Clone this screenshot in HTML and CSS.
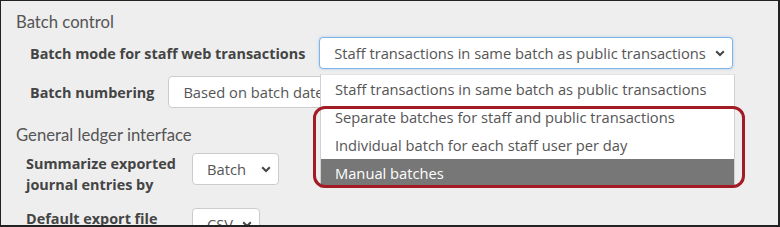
FILE: index.html
```html
<!DOCTYPE html>
<html lang="en">
<head>
    <meta charset="UTF-8">
    <title>Batch control settings</title>
    <link rel="stylesheet" href="styles.css">
</head>
<body>
    <div class="frame">
        <h2 class="section-title">Batch control</h2>
        <div class="field">
            <label class="field-label">Batch mode for staff web transactions</label>
            <div class="select select-focus select-mode">
                <span>Staff transactions in same batch as public transactions</span>
                <svg class="chevron" width="10" height="7" viewBox="0 0 10 7"><path d="M1.2 1.3 L5 5 L8.8 1.3" fill="none" stroke="#444" stroke-width="2"/></svg>
            </div>
        </div>
        <div class="field">
            <label class="field-label">Batch numbering</label>
            <div class="select select-numbering">
                <span>Based on batch date</span>
            </div>
        </div>

        <h2 class="section-title section-gl">General ledger interface</h2>
        <div class="field field-gl">
            <label class="field-label field-label-wrap">Summarize exported journal entries by</label>
            <div class="select select-small">
                <span>Batch</span>
                <svg class="chevron" width="10" height="7" viewBox="0 0 10 7"><path d="M1.2 1.3 L5 5 L8.8 1.3" fill="none" stroke="#444" stroke-width="2"/></svg>
            </div>
        </div>
        <div class="field field-gl field-export">
            <label class="field-label field-label-wrap">Default export file format</label>
            <div class="select select-csv">
                <span>CSV</span>
                <svg class="chevron" width="10" height="7" viewBox="0 0 10 7"><path d="M1.2 1.3 L5 5 L8.8 1.3" fill="none" stroke="#444" stroke-width="2"/></svg>
            </div>
        </div>

        <ul class="dropdown">
            <li class="option">Staff transactions in same batch as public transactions</li>
            <li class="option">Separate batches for staff and public transactions</li>
            <li class="option">Individual batch for each staff user per day</li>
            <li class="option option-active">Manual batches</li>
        </ul>
        <div class="highlight"></div>
    </div>
</body>
</html>
```

FILE: styles.css
```css
body {
    margin: 0;
    font-family: "Open Sans", sans-serif;
}

.frame {
    position: relative;
    width: 780px;
    height: 227px;
    box-sizing: border-box;
    padding: 10px 0 0 15px;
    background-color: #eeeeee;
    border-style: solid;
    border-color: #222;
    border-width: 1px 2px 2px 1px;
    overflow: hidden;
}

.section-title {
    margin: 0;
    font-family: Lato, sans-serif;
    font-size: 16.7px;
    font-weight: normal;
    line-height: 22px;
    color: #555;
}
.section-gl {
    margin-top: 16px;
}

.field {
    display: flex;
    flex-flow: row nowrap;
    align-items: center;
    gap: 14px;
    margin: 4px 0 7px 14px;
}
.field-gl {
    align-items: flex-start;
    margin: 7px 0 0 10px;
    gap: 14px;
}
.field-export {
    margin-top: 13px;
}
.field-label {
    font-size: 14.4px;
    font-weight: bold;
    color: #444;
    white-space: nowrap;
}
.field-label-wrap {
    width: 152px;
    white-space: normal;
    line-height: 21px;
}

.select {
    display: flex;
    align-items: center;
    height: 32px;
    box-sizing: border-box;
    padding: 0 7px 0 14px;
    background-color: #fff;
    border: 1px solid #ccc;
    border-radius: 4px;
    font-size: 14.7px;
    color: #555;
    white-space: nowrap;
    overflow: hidden;
    flex-shrink: 0;
}
.select span {
    flex: 1;
}
.select-focus {
    border-color: #7fb4e6;
    box-shadow: 0 0 3px rgba(100, 160, 230, 0.45);
}
.select-mode {
    width: 414px;
}
.select-numbering {
    width: 200px;
}
.select-small {
    width: 87px;
    padding-left: 14px;
}
.select-csv {
    width: 68px;
}
.chevron {
    margin-left: 8px;
    flex-shrink: 0;
}

.dropdown {
    position: absolute;
    left: 319px;
    top: 73px;
    width: 413px;
    margin: 0;
    padding: 0;
    list-style: none;
    background-color: #fff;
    border: 1px solid #d0d0d0;
    border-top-color: #e4e4e4;
}
.option {
    height: 28px;
    line-height: 28px;
    padding-left: 14px;
    font-size: 14.7px;
    color: #555;
    white-space: nowrap;
}
.option-active {
    background-color: #777;
    color: #fff;
}

.highlight {
    position: absolute;
    left: 312px;
    top: 105px;
    width: 432px;
    height: 82px;
    box-sizing: border-box;
    border: 3px solid #a31b24;
    border-radius: 12px;
}
```
